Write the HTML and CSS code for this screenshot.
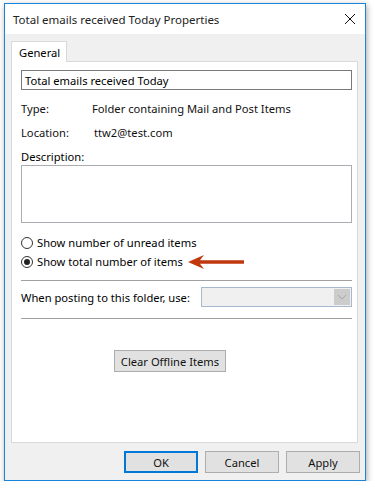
FILE: index.html
```html
<!DOCTYPE html>
<html lang="en">
<head>
  <meta charset="UTF-8" />
  <title>Total emails received Today Properties</title>
  <link rel="stylesheet" href="styles.css">
</head>
<body>

  <div class="window">
    <div class="titlebar">
      <span class="title">Total emails received Today Properties</span>
      <svg class="close" width="12" height="12" viewBox="0 0 12 12">
        <path d="M1 1 L11 11 M11 1 L1 11" stroke="#111" stroke-width="1" fill="none"/>
      </svg>
    </div>

    <div class="tabs">
      <div class="tab">General</div>
    </div>

    <div class="panel">
      <div class="field">Total emails received Today</div>

      <div class="info first">
        <span class="label">Type:</span>
        <span>Folder containing Mail and Post Items</span>
      </div>
      <div class="info">
        <span class="label">Location:</span>
        <span class="loc">ttw2@test.com</span>
      </div>

      <div class="desc-label">Description:</div>
      <div class="desc"></div>

      <div class="radio first"><span class="dot"></span>Show number of unread items</div>
      <div class="radio">
        <span class="dot on"></span>Show total number of items
        <svg class="arrow" width="58" height="16" viewBox="0 0 58 16">
          <path d="M1 8 L17 1 L13 6.2 L57 6.2 L57 9.8 L13 9.8 L17 15 Z" fill="#c1380f"/>
        </svg>
      </div>

      <div class="sep"></div>

      <div class="posting">
        <span>When posting to this folder, use:</span>
        <div class="combo">
          <span class="drop">
            <svg width="10" height="6" viewBox="0 0 10 6">
              <path d="M1 1 L5 5 L9 1" stroke="#a6a6a6" fill="none"/>
            </svg>
          </span>
        </div>
      </div>

      <div class="sep sep2"></div>

      <div class="clear-row">
        <button class="btn clear">Clear Offline Items</button>
      </div>
    </div>

    <div class="actions">
      <button class="btn ok">OK</button>
      <button class="btn">Cancel</button>
      <button class="btn">Apply</button>
    </div>
  </div>

</body>
</html>
```

FILE: styles.css
```css
body {
  margin: 0;
  padding: 3px 0 0 4px;
  background: #fff;
  font-family: "Noto Sans", "Open Sans", sans-serif;
  font-size: 11.2px;
  color: #000;
}
.window {
  width: 362px;
  height: 478px;
  box-sizing: border-box;
  border: 1px solid #1883d7;
  background: #f0f0f0;
  box-shadow: 1px 2px 6px rgba(0, 0, 0, 0.35);
}
.titlebar {
  height: 30px;
  background: #fff;
  display: flex;
  align-items: center;
  justify-content: space-between;
  padding: 0 8px 0 8px;
  font-size: 11.5px;
}
.title {
  color: #222;
  padding-top: 1px;
}
.close {
  margin-right: 1px;
}
.tabs {
  padding: 7px 0 0 6px;
  height: 20px;
}
.tab {
  width: 56px;
  height: 21px;
  box-sizing: border-box;
  background: #fff;
  border: 1px solid #d9d9d9;
  border-bottom: none;
  padding: 3px 0 0 7px;
  position: relative;
  z-index: 1;
}
.panel {
  margin-left: 6px;
  width: 347px;
  height: 382px;
  box-sizing: border-box;
  background: #fff;
  border: 1px solid #d9d9d9;
  padding: 8px 5px 0 9px;
}
.field {
  height: 20px;
  box-sizing: border-box;
  border: 1px solid #7a7a7a;
  padding: 2px 0 0 3px;
}
.info {
  display: grid;
  grid-template-columns: 71px 1fr;
  height: 24px;
  align-items: center;
  color: #111;
}
.info.first {
  margin-top: 6px;
}
.loc {
  padding-left: 2px;
}
.desc-label {
  margin-top: 5px;
  line-height: 16px;
}
.desc {
  height: 58px;
  box-sizing: border-box;
  border: 1px solid #abadb3;
}
.radio {
  height: 19px;
  display: flex;
  align-items: center;
}
.radio.first {
  margin-top: 10px;
}
.dot {
  width: 12px;
  height: 12px;
  box-sizing: border-box;
  border: 1px solid #333;
  border-radius: 50%;
  margin-right: 4px;
  position: relative;
}
.dot.on::after {
  content: "";
  position: absolute;
  left: 2px;
  top: 2px;
  width: 6px;
  height: 6px;
  border-radius: 50%;
  background: #222;
}
.arrow {
  margin-left: 4px;
}
.sep {
  height: 1px;
  background: #a0a0a0;
  margin-top: 9px;
}
.posting {
  margin-top: 6px;
  display: flex;
  align-items: center;
  justify-content: space-between;
  height: 20px;
  white-space: nowrap;
}
.combo {
  width: 151px;
  height: 20px;
  box-sizing: border-box;
  border: 1px solid #a7b7cf;
  background: #f0f0f0;
  display: flex;
  justify-content: flex-end;
  padding: 1px;
}
.drop {
  width: 16px;
  background: #cccccc;
  display: flex;
  align-items: center;
  justify-content: center;
}
.sep2 {
  margin-top: 11px;
}
.clear-row {
  margin-top: 31px;
  padding-left: 93px;
}
.btn {
  height: 22px;
  box-sizing: border-box;
  border: 1px solid #adadad;
  background: #e1e1e1;
  font-family: inherit;
  font-size: 11.2px;
  color: #111;
  padding: 0;
}
.clear {
  width: 112px;
}
.actions {
  display: flex;
  padding: 8px 0 0 119px;
  gap: 7px;
}
.actions .btn {
  width: 74px;
}
.ok {
  border: 2px solid #0078d7;
}
```
